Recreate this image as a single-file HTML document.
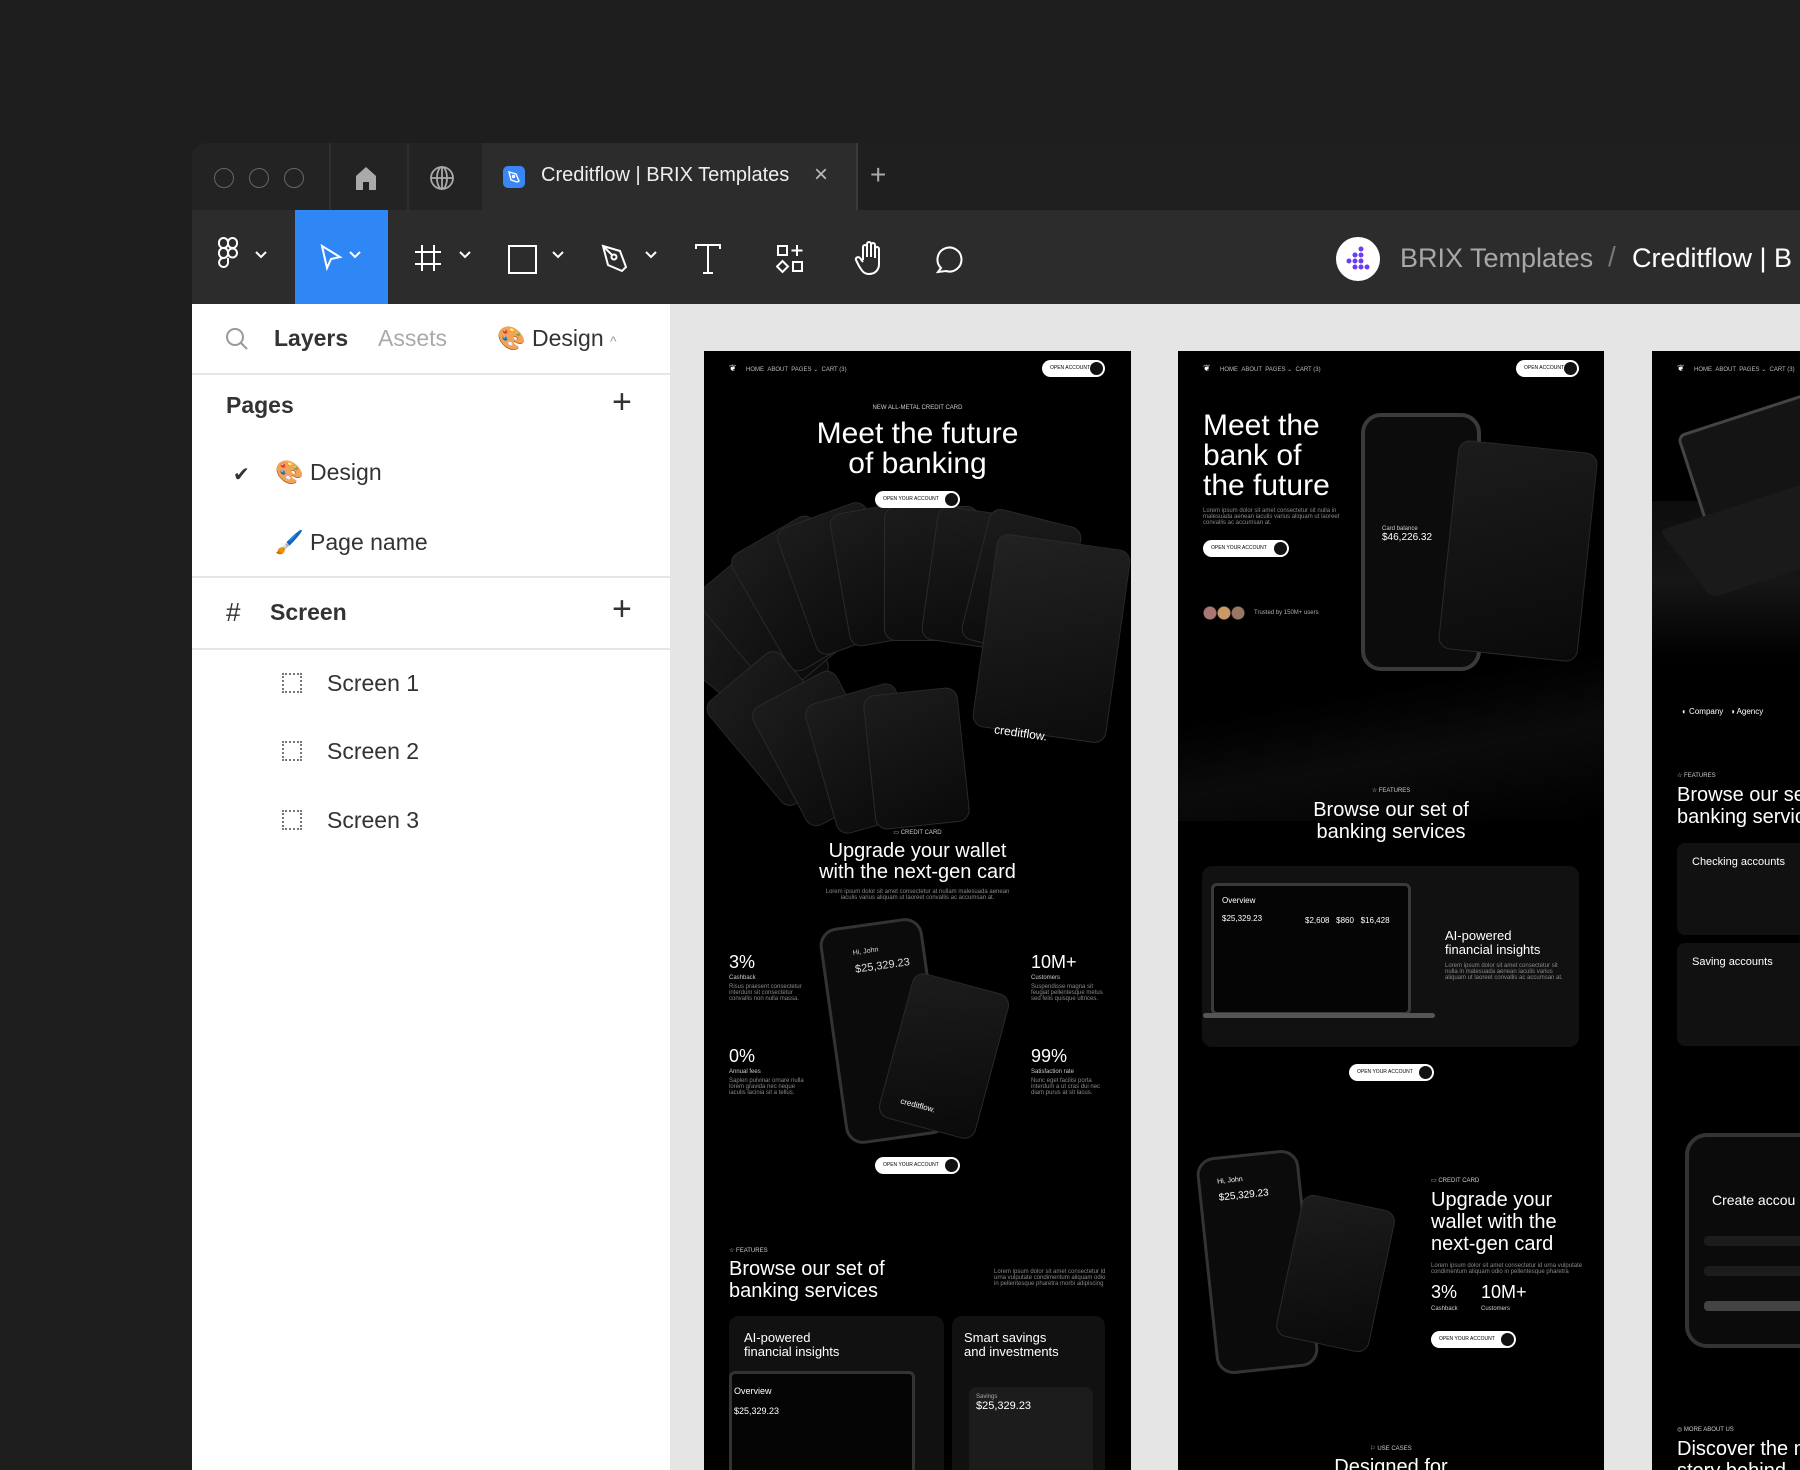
<!DOCTYPE html>
<html><head><meta charset="utf-8"><style>
*{margin:0;padding:0;box-sizing:border-box}
body{width:1800px;height:1470px;background:#1e1e1f;font-family:"Liberation Sans",sans-serif;position:relative;overflow:hidden}
.a{position:absolute}
.win{left:192px;top:143px;width:1608px;height:1327px;background:#232323;border-radius:14px 0 0 0;overflow:hidden}
.tabbar{left:0;top:0;width:1608px;height:67px;background:#1f1f1f}
.toolbar{left:0;top:67px;width:1608px;height:94px;background:#2c2c2c}
.panel{left:0;top:161px;width:478px;height:1166px;background:#fff}
.canvas{left:478px;top:161px;width:1130px;height:1166px;background:#e5e5e5}
.t{color:#fff;white-space:nowrap;font-weight:300}
.frame{background:#000;overflow:hidden;top:351px}
.btn{background:#fff;border-radius:10px;height:17px;font-size:5px;color:#000;line-height:17px;padding-left:8px}
.btn:after{content:"";position:absolute;right:2px;top:2px;width:13px;height:13px;border-radius:50%;background:#111}
.card{background:linear-gradient(160deg,#1c1c1c,#0a0a0a);border:1px solid #2a2a2a;border-radius:12px}
.small{font-size:6px;color:#888}
.li{font-size:23px;color:#333}
.chev{position:absolute;top:40px}
.dot{position:absolute;left:90px;width:20px;height:20px;border:2px dotted #777}
.hr{position:absolute;left:0;width:478px;height:2px;background:#e6e6e6}
</style></head><body>
<div class="a win">
 <div class="a tabbar">
  <div class="a" style="left:0;top:0;width:290px;height:67px;background:#232323"></div>
  <div class="a" style="left:22px;top:25px;width:20px;height:20px;border:1.5px solid #666;border-radius:50%"></div>
  <div class="a" style="left:57px;top:25px;width:20px;height:20px;border:1.5px solid #666;border-radius:50%"></div>
  <div class="a" style="left:92px;top:25px;width:20px;height:20px;border:1.5px solid #666;border-radius:50%"></div>
  <div class="a" style="left:137px;top:0;width:2px;height:67px;background:#2e2e2e"></div>
  <svg class="a" style="left:162px;top:22px" width="24" height="26" viewBox="0 0 24 26"><path d="M2 11 L12 2 L22 11 V25 H15 V17 H9 V25 H2Z" fill="#aaa"/></svg>
  <div class="a" style="left:215px;top:0;width:2px;height:67px;background:#2e2e2e"></div>
  <svg class="a" style="left:237px;top:22px" width="26" height="26" viewBox="0 0 26 26" fill="none" stroke="#aaa" stroke-width="1.8"><circle cx="13" cy="13" r="11"/><path d="M2 13H24M13 2V24"/><ellipse cx="13" cy="13" rx="5" ry="11"/></svg>
  <div class="a" style="left:290px;top:0;width:374px;height:67px;background:#2c2c2c"></div>
  <div class="a" style="left:664px;top:0;width:2px;height:67px;background:#3a3a3a"></div>
  <div class="a" style="left:311px;top:23px;width:22px;height:22px;background:#3b86f7;border-radius:5px"></div>
  <svg class="a" style="left:315px;top:27px" width="14" height="14" viewBox="0 0 14 14" fill="none" stroke="#fff" stroke-width="1.4"><path d="M2 2 L9 4 L12 11 L10 12 L4 10Z"/><circle cx="6.5" cy="6.5" r="1"/></svg>
  <div class="a t" style="left:349px;top:21px;font-size:20px;font-weight:400;color:#eee">Creditflow | BRIX Templates</div>
  <div class="a t" style="left:622px;top:18px;font-size:24px;color:#bbb">×</div>
  <div class="a t" style="left:678px;top:16px;font-size:28px;color:#aaa">+</div>
 </div>
 <div class="a toolbar">
  <svg class="a" style="left:26px;top:27px" width="20" height="34" viewBox="0 0 20 34" fill="none" stroke="#fff" stroke-width="2"><rect x="1" y="1" width="9" height="10" rx="4.5"/><rect x="10" y="1" width="9" height="10" rx="4.5"/><rect x="1" y="11" width="9" height="10" rx="4.5"/><circle cx="14.5" cy="16" r="4.5"/><path d="M10 21 V26 A4.5 4.5 0 1 1 5.5 21"/></svg>
  <svg class="chev" style="left:62px" width="14" height="10" viewBox="0 0 14 10"><path d="M2 2 L7 7 L12 2" fill="none" stroke="#fff" stroke-width="2"/></svg>
  <div class="a" style="left:103px;top:0;width:93px;height:94px;background:#2f87f6"></div>
  <svg class="a" style="left:127px;top:33px" width="24" height="28" viewBox="0 0 24 28"><path d="M3 3 L21 14 L12 16 L8 25Z" fill="none" stroke="#fff" stroke-width="2"/></svg>
  <svg class="chev" style="left:156px" width="14" height="10" viewBox="0 0 14 10"><path d="M2 2 L7 7 L12 2" fill="none" stroke="#fff" stroke-width="2"/></svg>
  <svg class="a" style="left:222px;top:34px" width="28" height="28" viewBox="0 0 28 28" fill="none" stroke="#fff" stroke-width="2"><path d="M8 1V27M20 1V27M1 8H27M1 20H27"/></svg>
  <svg class="chev" style="left:266px" width="14" height="10" viewBox="0 0 14 10"><path d="M2 2 L7 7 L12 2" fill="none" stroke="#fff" stroke-width="2"/></svg>
  <div class="a" style="left:316px;top:35px;width:29px;height:29px;border:2px solid #fff"></div>
  <svg class="chev" style="left:359px" width="14" height="10" viewBox="0 0 14 10"><path d="M2 2 L7 7 L12 2" fill="none" stroke="#fff" stroke-width="2"/></svg>
  <svg class="a" style="left:408px;top:33px" width="30" height="32" viewBox="0 0 30 32" fill="none" stroke="#fff" stroke-width="2"><path d="M3 3 L20 8 L26 24 L22 28 L8 22Z"/><circle cx="14" cy="14" r="2.5"/><path d="M3 3 L12 12"/></svg>
  <svg class="chev" style="left:452px" width="14" height="10" viewBox="0 0 14 10"><path d="M2 2 L7 7 L12 2" fill="none" stroke="#fff" stroke-width="2"/></svg>
  <svg class="a" style="left:503px;top:34px" width="26" height="30" viewBox="0 0 26 30" fill="none" stroke="#fff" stroke-width="2"><path d="M1 5V1H25V5M13 1V29M8 29H18"/></svg>
  <svg class="a" style="left:584px;top:34px" width="30" height="30" viewBox="0 0 30 30" fill="none" stroke="#fff" stroke-width="2"><rect x="2" y="2" width="9" height="9"/><path d="M21 1V12M15.5 6.5H26.5"/><path d="M6.5 17L12 22.5L6.5 28L1 22.5Z"/><rect x="17" y="18" width="9" height="9"/></svg>
  <svg class="a" style="left:662px;top:30px" width="32" height="36" viewBox="0 0 32 36" fill="none" stroke="#fff" stroke-width="2"><path d="M9 20V7a2 2 0 0 1 4 0V17M13 17V4a2 2 0 0 1 4 0V17M17 17V5a2 2 0 0 1 4 0V18M21 18V9a2 2 0 0 1 4 0V24c0 6-4 10-10 10c-5 0-7-3-10-8L2 20c-1-2 2-4 4-2L9 22"/></svg>
  <svg class="a" style="left:743px;top:34px" width="30" height="30" viewBox="0 0 30 30" fill="none" stroke="#fff" stroke-width="2"><path d="M6 24A12 12 0 1 1 11 27L3 28Z"/></svg>
  <div class="a" style="left:1144px;top:27px;width:44px;height:44px;border-radius:50%;background:#fff"></div>
  <svg class="a" style="left:1154px;top:35px" width="26" height="28" viewBox="0 0 26 28" fill="#6b3cf5"><circle cx="15" cy="4" r="2.5"/><circle cx="9" cy="10" r="2.5"/><circle cx="15" cy="10" r="2.5"/><circle cx="3" cy="16" r="2.5"/><circle cx="9" cy="16" r="2.5"/><circle cx="15" cy="16" r="2.5"/><circle cx="9" cy="22" r="2.5"/><circle cx="15" cy="22" r="2.5"/><circle cx="21" cy="22" r="2.5"/></svg>
  <div class="a t" style="left:1208px;top:33px;font-size:27px;font-weight:400;color:#a8a8a8">BRIX Templates</div>
  <div class="a t" style="left:1416px;top:31px;font-size:28px;color:#777">/</div>
  <div class="a t" style="left:1440px;top:33px;font-size:27px;font-weight:400;color:#fff">Creditflow | B</div>
 </div>
 <div class="a panel">
  <svg class="a" style="left:33px;top:23px" width="24" height="24" viewBox="0 0 24 24" fill="none" stroke="#999" stroke-width="2"><circle cx="10" cy="10" r="8"/><path d="M16 16L22 22"/></svg>
  <div class="a" style="left:82px;top:21px;font-size:23px;color:#333;font-weight:bold">Layers</div>
  <div class="a" style="left:186px;top:21px;font-size:23px;color:#aaa">Assets</div>
  <div class="a" style="left:305px;top:21px;font-size:23px;color:#333">🎨 Design <span style="font-size:14px;color:#999">^</span></div>
  <div class="hr" style="top:69px"></div>
  <div class="a" style="left:34px;top:88px;font-size:23px;color:#333;font-weight:bold">Pages</div>
  <div class="a" style="left:420px;top:79px;font-size:34px;color:#333;font-weight:300">+</div>
  <div class="a" style="left:41px;top:158px;font-size:20px;color:#333">✔</div>
  <div class="a li" style="left:83px;top:155px">🎨 Design</div>
  <div class="a li" style="left:83px;top:225px">🖌️ Page name</div>
  <div class="hr" style="top:272px"></div>
  <div class="a" style="left:34px;top:293px;font-size:26px;color:#333">#</div>
  <div class="a" style="left:78px;top:295px;font-size:23px;color:#333;font-weight:bold">Screen</div>
  <div class="a" style="left:420px;top:286px;font-size:34px;color:#333;font-weight:300">+</div>
  <div class="hr" style="top:344px"></div>
  <div class="dot" style="top:369px"></div>
  <div class="a li" style="left:135px;top:366px">Screen 1</div>
  <div class="dot" style="top:437px"></div>
  <div class="a li" style="left:135px;top:434px">Screen 2</div>
  <div class="dot" style="top:506px"></div>
  <div class="a li" style="left:135px;top:503px">Screen 3</div>
 </div>
 <div class="a canvas"></div>
</div>

<!-- Frame 1 -->
<div class="a frame" style="left:704px;width:427px;height:1119px">
 <div class="a t" style="left:25px;top:12px;font-size:9px">❦</div>
 <div class="a t small" style="left:42px;top:15px;color:#bbb">HOME &nbsp;ABOUT &nbsp;PAGES ⌄ &nbsp;CART (3)</div>
 <div class="a btn" style="left:338px;top:9px;width:63px">OPEN ACCOUNT</div>
 <div class="a t small" style="left:0;width:427px;text-align:center;top:54px;color:#ccc">NEW ALL-METAL CREDIT CARD</div>
 <div class="a t" style="left:0;width:427px;text-align:center;top:68px;font-size:30px;line-height:30px">Meet the future<br>of banking</div>
 <div class="a card" style="left:0;top:240px;width:95px;height:135px;transform:rotate(-50deg)"></div>
 <div class="a card" style="left:20px;top:200px;width:95px;height:135px;transform:rotate(-40deg)"></div>
 <div class="a card" style="left:50px;top:175px;width:95px;height:135px;transform:rotate(-30deg)"></div>
 <div class="a card" style="left:90px;top:160px;width:95px;height:135px;transform:rotate(-20deg)"></div>
 <div class="a card" style="left:135px;top:155px;width:95px;height:135px;transform:rotate(-10deg)"></div>
 <div class="a card" style="left:180px;top:155px;width:95px;height:135px;transform:rotate(0deg)"></div>
 <div class="a card" style="left:225px;top:160px;width:95px;height:135px;transform:rotate(8deg)"></div>
 <div class="a card" style="left:270px;top:165px;width:95px;height:135px;transform:rotate(14deg)"></div>
 <div class="a card" style="left:30px;top:310px;width:95px;height:135px;transform:rotate(-40deg)"></div>
 <div class="a card" style="left:70px;top:330px;width:95px;height:135px;transform:rotate(-28deg)"></div>
 <div class="a card" style="left:115px;top:340px;width:95px;height:135px;transform:rotate(-16deg)"></div>
 <div class="a card" style="left:165px;top:340px;width:95px;height:135px;transform:rotate(-6deg)"></div>
 <div class="a card" style="left:280px;top:190px;width:135px;height:195px;transform:rotate(8deg);background:linear-gradient(160deg,#222,#0c0c0c)"></div>
 <div class="a t" style="left:290px;top:375px;font-size:12px;transform:rotate(8deg)">creditflow.</div>
 <div class="a btn" style="left:171px;top:140px;width:85px">OPEN YOUR ACCOUNT</div>
 <div class="a t small" style="left:0;width:427px;text-align:center;top:478px;color:#ccc">▭ CREDIT CARD</div>
 <div class="a t" style="left:0;width:427px;text-align:center;top:490px;font-size:20px;line-height:21px">Upgrade your wallet<br>with the next-gen card</div>
 <div class="a t small" style="left:0;width:427px;text-align:center;top:538px">Lorem ipsum dolor sit amet consectetur at nullam malesuada aenean<br>iaculis varius aliquam ut laoreet convallis ac accumsan at.</div>
 <div class="a t" style="left:25px;top:601px;font-size:18px">3%</div>
 <div class="a t small" style="left:25px;top:624px;color:#ccc">Cashback</div>
 <div class="a t small" style="left:25px;top:633px">Risus praesent consectetur<br>interdum sit consectetur<br>convallis non nulla massa.</div>
 <div class="a t" style="left:327px;top:601px;font-size:18px">10M+</div>
 <div class="a t small" style="left:327px;top:624px;color:#ccc">Customers</div>
 <div class="a t small" style="left:327px;top:633px">Suspendisse magna sit<br>feugiat pellentesque metus<br>sed felis quisque ultrices.</div>
 <div class="a t" style="left:25px;top:695px;font-size:18px">0%</div>
 <div class="a t small" style="left:25px;top:718px;color:#ccc">Annual fees</div>
 <div class="a t small" style="left:25px;top:727px">Sapien pulvinar ornare nulla<br>lorem gravida nec neque<br>iaculis lacinia sit a tellus.</div>
 <div class="a t" style="left:327px;top:695px;font-size:18px">99%</div>
 <div class="a t small" style="left:327px;top:718px;color:#ccc">Satisfaction rate</div>
 <div class="a t small" style="left:327px;top:727px">Nunc eget facilisi porta<br>interdum a ut cras dui nec<br>diam purus at sit lacus.</div>
 <div class="a" style="left:128px;top:571px;width:104px;height:218px;border:3px solid #333;border-radius:18px;background:#0b0b0b;transform:rotate(-8deg)"></div>
 <div class="a t small" style="left:150px;top:595px;font-size:7px;color:#ddd;transform:rotate(-8deg)">Hi, John<br><br><span style="font-size:11px">$25,329.23</span></div>
 <div class="a card" style="left:190px;top:630px;width:100px;height:150px;transform:rotate(15deg)"></div>
 <div class="a t" style="left:196px;top:750px;font-size:8px;transform:rotate(15deg)">creditflow.</div>
 <div class="a btn" style="left:171px;top:806px;width:85px">OPEN YOUR ACCOUNT</div>
 <div class="a t small" style="left:25px;top:896px;color:#ccc">☆ FEATURES</div>
 <div class="a t" style="left:25px;top:907px;font-size:20px;line-height:22px">Browse our set of<br>banking services</div>
 <div class="a t small" style="left:290px;top:918px">Lorem ipsum dolor sit amet consectetur id<br>urna vulputate condimentum aliquam odio<br>in pellentesque pharetra morbi adipiscing</div>
 <div class="a" style="left:25px;top:965px;width:215px;height:200px;background:#111;border-radius:10px"></div>
 <div class="a t" style="left:40px;top:980px;font-size:13px;line-height:14px">AI-powered<br>financial insights</div>
 <div class="a" style="left:25px;top:1020px;width:186px;height:110px;background:#050505;border:3px solid #333;border-radius:6px"></div>
 <div class="a t" style="left:30px;top:1035px;font-size:9px">Overview<br><br>$25,329.23</div>
 <div class="a" style="left:248px;top:965px;width:153px;height:200px;background:#111;border-radius:10px"></div>
 <div class="a t" style="left:260px;top:980px;font-size:13px;line-height:14px">Smart savings<br>and investments</div>
 <div class="a" style="left:265px;top:1036px;width:124px;height:90px;background:#1c1c1c;border-radius:8px"></div>
 <div class="a t" style="left:272px;top:1043px;font-size:6px;color:#aaa">Savings<br><span style="font-size:11px;color:#fff">$25,329.23</span></div>
</div>

<!-- Frame 2 -->
<div class="a frame" style="left:1178px;width:426px;height:1119px">
 <div class="a t" style="left:25px;top:12px;font-size:9px">❦</div>
 <div class="a t small" style="left:42px;top:15px;color:#bbb">HOME &nbsp;ABOUT &nbsp;PAGES ⌄ &nbsp;CART (3)</div>
 <div class="a btn" style="left:338px;top:9px;width:63px">OPEN ACCOUNT</div>
 <div class="a t" style="left:25px;top:60px;font-size:30px;line-height:30px">Meet the<br>bank of<br>the future</div>
 <div class="a t small" style="left:25px;top:157px">Lorem ipsum dolor sit amet consectetur sit nulla in<br>malesuada aenean iaculis varius aliquam ut laoreet<br>convallis ac accumsan at.</div>
 <div class="a btn" style="left:25px;top:189px;width:86px">OPEN YOUR ACCOUNT</div>
 <div class="a" style="left:25px;top:255px;width:44px;height:14px;background:radial-gradient(circle at 7px 7px,#a77 6px,transparent 7px),radial-gradient(circle at 21px 7px,#c96 6px,transparent 7px),radial-gradient(circle at 35px 7px,#976 6px,transparent 7px)"></div>
 <div class="a t small" style="left:76px;top:259px;color:#aaa">Trusted by 150M+ users</div>
 <div class="a" style="left:0;top:300px;width:426px;height:170px;background:linear-gradient(170deg,transparent 30%,#0b0b0b 60%,#000)"></div>
 <div class="a" style="left:183px;top:62px;width:120px;height:258px;border:4px solid #3a3a3a;border-radius:20px;background:#0c0c0c"></div>
 <div class="a t small" style="left:204px;top:175px;color:#ccc">Card balance<br><span style="font-size:10px;color:#fff">$46,226.32</span></div>
 <div class="a card" style="left:270px;top:95px;width:140px;height:210px;transform:rotate(6deg)"></div>
 <div class="a t small" style="left:0;width:426px;text-align:center;top:436px;color:#ccc">☆ FEATURES</div>
 <div class="a t" style="left:0;width:426px;text-align:center;top:448px;font-size:20px;line-height:22px">Browse our set of<br>banking services</div>
 <div class="a" style="left:24px;top:515px;width:377px;height:181px;background:#111;border-radius:10px"></div>
 <div class="a" style="left:33px;top:532px;width:200px;height:132px;background:#050505;border:3px solid #3a3a3a;border-radius:6px"></div>
 <div class="a" style="left:25px;top:662px;width:232px;height:5px;background:#555;border-radius:3px"></div>
 <div class="a t" style="left:44px;top:545px;font-size:8px">Overview<br><br>$25,329.23</div>
 <div class="a t" style="left:127px;top:565px;font-size:8px">$2,608 &nbsp;&nbsp;$860 &nbsp;&nbsp;$16,428</div>
 <div class="a t" style="left:267px;top:578px;font-size:13px;line-height:14px">AI-powered<br>financial insights</div>
 <div class="a t small" style="left:267px;top:612px">Lorem ipsum dolor sit amet consectetur sit<br>nulla in malesuada aenean iaculis varius<br>aliquam ut laoreet convallis ac accumsan at.</div>
 <div class="a btn" style="left:171px;top:713px;width:85px">OPEN YOUR ACCOUNT</div>
 <div class="a" style="left:28px;top:802px;width:103px;height:218px;border:3px solid #333;border-radius:18px;background:#0b0b0b;transform:rotate(-6deg)"></div>
 <div class="a t" style="left:40px;top:825px;font-size:7px;transform:rotate(-6deg)">Hi, John<br><br><span style="font-size:10px">$25,329.23</span></div>
 <div class="a card" style="left:110px;top:850px;width:95px;height:145px;transform:rotate(12deg)"></div>
 <div class="a t small" style="left:253px;top:826px;color:#ccc">▭ CREDIT CARD</div>
 <div class="a t" style="left:253px;top:838px;font-size:20px;line-height:22px">Upgrade your<br>wallet with the<br>next-gen card</div>
 <div class="a t small" style="left:253px;top:912px">Lorem ipsum dolor sit amet consectetur id urna vulputate<br>condimentum aliquam odio in pellentesque pharetra</div>
 <div class="a t" style="left:253px;top:931px;font-size:18px">3%</div>
 <div class="a t" style="left:303px;top:931px;font-size:18px">10M+</div>
 <div class="a t small" style="left:253px;top:955px;color:#ccc">Cashback</div>
 <div class="a t small" style="left:303px;top:955px;color:#ccc">Customers</div>
 <div class="a btn" style="left:253px;top:980px;width:85px">OPEN YOUR ACCOUNT</div>
 <div class="a t small" style="left:0;width:426px;text-align:center;top:1094px;color:#ccc">⚐ USE CASES</div>
 <div class="a t" style="left:0;width:426px;text-align:center;top:1105px;font-size:20px">Designed for</div>
</div>

<!-- Frame 3 -->
<div class="a frame" style="left:1652px;width:160px;height:1119px">
 <div class="a t" style="left:25px;top:12px;font-size:9px">❦</div>
 <div class="a t small" style="left:42px;top:15px;color:#bbb">HOME &nbsp;ABOUT &nbsp;PAGES ⌄ &nbsp;CART (3)</div>
 <div class="a" style="left:0;top:150px;width:160px;height:160px;background:linear-gradient(180deg,#0d0d0d,#161616 50%,#000)"></div>
 <div class="a" style="left:38px;top:60px;width:140px;height:110px;background:#141414;border:3px solid #444;border-radius:8px;transform:rotate(-18deg)"></div>
 <div class="a" style="left:30px;top:150px;width:150px;height:80px;background:#1a1a1a;border-radius:6px;transform:rotate(-18deg) skewX(20deg)"></div>
 <div class="a t" style="left:30px;top:356px;font-size:8px">◐ Company &nbsp;&nbsp;◑ Agency</div>
 <div class="a t small" style="left:25px;top:421px;color:#ccc">☆ FEATURES</div>
 <div class="a t" style="left:25px;top:433px;font-size:20px;line-height:22px">Browse our se<br>banking servic</div>
 <div class="a" style="left:25px;top:492px;width:140px;height:92px;background:#111;border-radius:8px"></div>
 <div class="a t" style="left:40px;top:505px;font-size:11px">Checking accounts</div>
 <div class="a" style="left:25px;top:592px;width:140px;height:103px;background:#111;border-radius:8px"></div>
 <div class="a t" style="left:40px;top:605px;font-size:11px">Saving accounts</div>
 <div class="a" style="left:33px;top:782px;width:140px;height:215px;border:4px solid #333;border-radius:22px;background:#0b0b0b"></div>
 <div class="a t" style="left:60px;top:841px;font-size:14px">Create accou</div>
 <div class="a" style="left:52px;top:885px;width:120px;height:10px;background:#1c1c1c;border-radius:4px"></div>
 <div class="a" style="left:52px;top:915px;width:120px;height:10px;background:#1c1c1c;border-radius:4px"></div>
 <div class="a" style="left:52px;top:950px;width:120px;height:10px;background:#444;border-radius:4px"></div>
 <div class="a t small" style="left:25px;top:1075px;color:#ccc">◎ MORE ABOUT US</div>
 <div class="a t" style="left:25px;top:1087px;font-size:20px;line-height:22px">Discover the m<br>story behind</div>
</div>
</body></html>
